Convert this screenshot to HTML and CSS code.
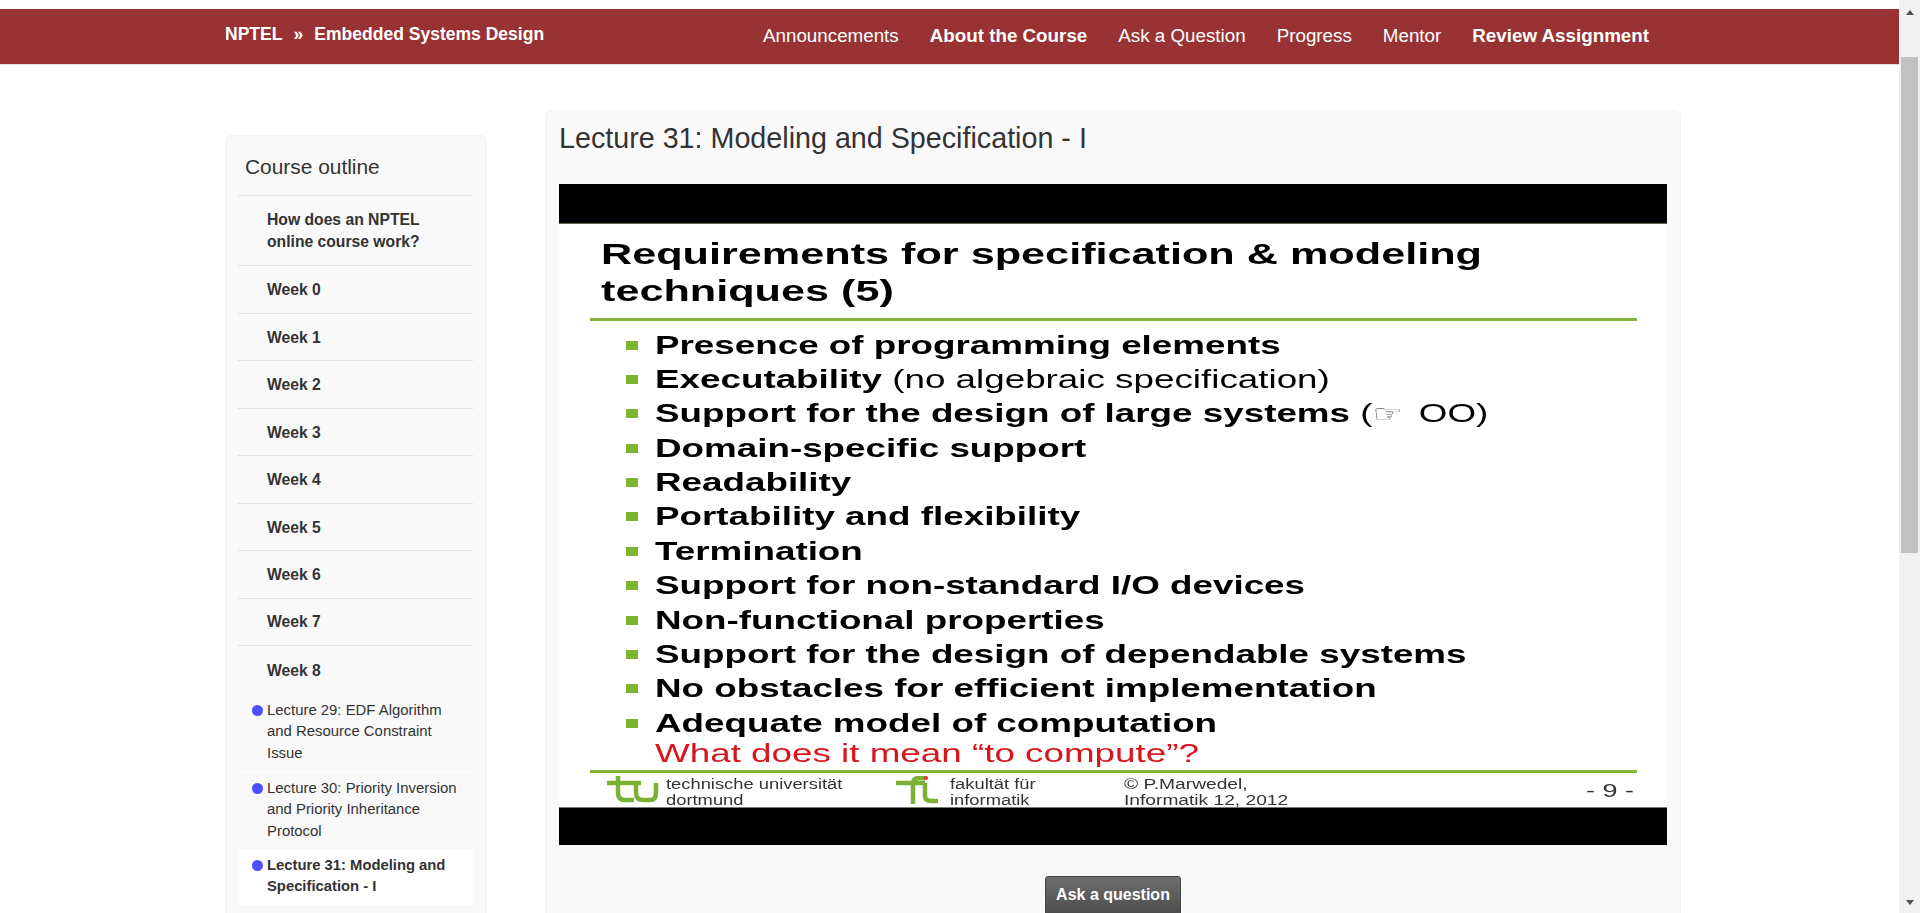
FILE: index.html
```html
<!DOCTYPE html>
<html lang="en">
<head>
<meta charset="utf-8">
<title>Lecture 31: Modeling and Specification - I</title>
<link rel="stylesheet" href="styles.css">
</head>
<body>
<div class="page">
  <header class="nav">
    <div class="brand"><span>NPTEL</span><span>»</span><span>Embedded Systems Design</span></div>
    <nav class="links">
      <a>Announcements</a>
      <a class="strong">About the Course</a>
      <a>Ask a Question</a>
      <a>Progress</a>
      <a>Mentor</a>
      <a class="strong">Review Assignment</a>
    </nav>
  </header>
  <div class="content">
    <aside class="outline">
      <h2 class="outline-title">Course outline</h2>
      <ul class="weeks">
        <li class="intro">How does an NPTEL online course work?</li>
        <li>Week 0</li>
        <li>Week 1</li>
        <li>Week 2</li>
        <li>Week 3</li>
        <li>Week 4</li>
        <li>Week 5</li>
        <li>Week 6</li>
        <li>Week 7</li>
        <li class="open">Week 8</li>
      </ul>
      <ul class="lectures">
        <li class="divided"><i class="dot"></i><span>Lecture 29: EDF Algorithm and Resource Constraint Issue</span></li>
        <li><i class="dot"></i><span>Lecture 30: Priority Inversion and Priority Inheritance Protocol</span></li>
        <li class="active"><i class="dot"></i><span>Lecture 31: Modeling and Specification - I</span></li>
      </ul>
    </aside>
    <main class="lecture">
      <h1 class="lecture-title">Lecture 31: Modeling and Specification - I</h1>
      <div class="video">
        <div class="bar bar-top"></div>
        <div class="slide">
          <div class="slide-title"><div>Requirements for specification &amp; modeling</div><div>techniques (5)</div></div>
          <div class="rule rule-top"></div>
          <ul class="points">
            <li><span>Presence of programming elements</span></li>
            <li><span>Executability <em>(no algebraic specification)</em></span></li>
            <li><span>Support for the design of large systems <em>(<b class="hand">☞</b> OO)</em></span></li>
            <li><span>Domain-specific support</span></li>
            <li><span>Readability</span></li>
            <li><span>Portability and flexibility</span></li>
            <li><span>Termination</span></li>
            <li><span>Support for non-standard I/O devices</span></li>
            <li><span>Non-functional properties</span></li>
            <li><span>Support for the design of dependable systems</span></li>
            <li><span>No obstacles for efficient implementation</span></li>
            <li><span>Adequate model of computation</span></li>
          </ul>
          <p class="red"><span>What does it mean “to compute”?</span></p>
          <div class="rule rule-bottom"></div>
          <div class="slide-foot">
            <svg class="logo-tu" viewBox="0 0 52 27" aria-hidden="true"><path d="M0 7H34M11 0V17Q11 24 18 24H27M29 7V17Q29 24 36 24H43Q49 24 49 17V7" fill="none" stroke="#7cb233" stroke-width="4.5"/></svg>
            <div class="foot-cell foot-tu"><div class="foot-text">technische universität<br>dortmund</div></div>
            <svg class="logo-fi" viewBox="0 0 42 28" aria-hidden="true"><path d="M0 7H29M17 28V8Q17 2 23 2H29M29 7V20Q29 25 35 25H42" fill="none" stroke="#7cb233" stroke-width="4.5"/><circle cx="30" cy="2" r="2" fill="#e0312f"/></svg>
            <div class="foot-cell foot-fi"><div class="foot-text">fakultät für<br>informatik</div></div>
            <div class="foot-cell foot-copy"><div class="foot-text wide">© P.Marwedel,<br>Informatik 12, 2012</div></div>
            <div class="foot-page">- 9 -</div>
          </div>
        </div>
        <div class="bar bar-bottom"></div>
      </div>
      <div class="actions"><button class="ask" type="button">Ask a question</button></div>
    </main>
  </div>
</div>
<div class="scrollbar">
  <div class="arrow arrow-up"></div>
  <div class="thumb"></div>
  <div class="arrow arrow-down"></div>
</div>
</body>
</html>
```
FILE: styles.css
```css
* { box-sizing: border-box; }
html, body { margin: 0; height: 913px; overflow: hidden; }
body {
  display: flex;
  background: #fff;
  color: #333;
  font-family: "Liberation Sans", Arial, sans-serif;
}
ul { list-style: none; margin: 0; padding: 0; }
h1, h2, p { margin: 0; font-weight: 400; }

.page { flex: 1; min-width: 0; padding-top: 9px; overflow: hidden; }

.nav {
  display: flex;
  justify-content: space-between;
  height: 56px;
  padding: 0 250px 0 225px;
  background: #993333;
  border-bottom: 1px solid #ddd;
  color: #fff;
}
.brand {
  display: flex;
  gap: 11px;
  padding-top: 14px;
  font-size: 17.55px;
  line-height: 22px;
  font-weight: 700;
}
.links {
  display: flex;
  gap: 31px;
  padding-top: 15px;
  font-size: 18.8px;
  line-height: 23px;
}
.links .strong { font-weight: 700; }

.content {
  display: flex;
  align-items: flex-start;
  gap: 58px;
  padding: 45px 0 0 225px;
}

.outline {
  width: 262px;
  margin-top: 25px;
  padding: 0 13px 40px 12px;
  background: #f9f9f9;
  border: 1px solid #f3f3f3;
  border-radius: 6px;
}
.outline-title {
  height: 60px;
  padding: 18px 0 0 7px;
  font-size: 20.9px;
  line-height: 25px;
  border-bottom: 1px solid #e2e2e2;
}
.weeks li {
  padding: 12.9px 25px 11.56px 29px;
  font-size: 15.7px;
  line-height: 22px;
  font-weight: 700;
  border-bottom: 1px solid #e2e2e2;
}
.weeks li.intro { padding-bottom: 12.56px; }
.weeks li.open { padding: 13.6px 25px 12.26px 29px; border-bottom: 0; }

.lectures li {
  display: flex;
  gap: 4.5px;
  padding: 6px 9px 6.6px 13.5px;
  font-size: 14.9px;
  line-height: 21.5px;
}
.lectures li.divided { border-bottom: 1px solid #fff; }
.lectures li.active {
  background: #fff;
  font-weight: 700;
  font-size: 14.8px;
}
.dot {
  flex: none;
  width: 11px;
  height: 11px;
  margin-top: 5px;
  border-radius: 50%;
  background: #4f4fff;
}

.lecture {
  width: 1136px;
  height: 900px;
  padding: 12px 13px 0;
  background: #f9f9f9;
  border: 1px solid #f3f3f3;
  border-radius: 6px;
}
.lecture-title {
  font-size: 28.7px;
  line-height: 30px;
  color: #333;
}
.video {
  width: 1108px;
  margin-top: 31px;
  overflow: hidden;
}
.bar { height: 40px; background: #000; }
.bar-top { border-bottom: 1px solid #5a6b45; }
.bar-bottom { height: 38px; border-top: 1px solid #777; }
.slide {
  height: 583px;
  background: #fff;
  color: #000;
  overflow: hidden;
  filter: blur(0.45px);
}
.slide-title {
  padding: 11px 0 0 41.5px;
  font-size: 30px;
  line-height: 37px;
  font-weight: 700;
  white-space: nowrap;
}
.slide-title div { transform: scaleX(1.44); transform-origin: left center; }
.rule { height: 3px; margin: 0 30px 0 31px; background: #85b53d; }
.rule-top { margin-top: 9px; }
.points { margin-top: 7px; padding-left: 67px; }
.points li {
  display: flex;
  align-items: center;
  height: 34.36px;
  font-size: 26px;
  font-weight: 700;
  white-space: nowrap;
}
.points li::before {
  content: "";
  flex: none;
  width: 12px;
  height: 9px;
  margin-right: 17px;
  background: #7fb52e;
}
.points span, .red span {
  display: inline-block;
  transform: scaleX(1.415);
  transform-origin: left center;
}
.points em { font-style: normal; font-weight: 400; }
.hand {
  display: inline-block;
  margin: 0 4px 0 0;
  font-family: "DejaVu Sans", sans-serif;
  font-weight: 400;
  font-size: 24px;
  line-height: 20px;
  color: #666;
}
.red {
  height: 26px;
  padding-left: 96px;
  font-size: 26px;
  line-height: 27px;
  color: #d8171d;
  white-space: nowrap;
}
.rule-bottom { margin-top: 4px; }
.slide-foot {
  display: flex;
  height: 33px;
  padding: 3px 0 0 48px;
  font-size: 14px;
  line-height: 16px;
  color: #333;
}
.foot-cell { padding-top: 0; }
.foot-text {
  white-space: nowrap;
  transform: scaleX(1.31);
  transform-origin: left center;
}
.foot-text.wide { transform: scaleX(1.37); }
.logo-tu { flex: none; width: 52px; height: 27px; margin-right: 7px; }
.foot-tu { width: 230px; }
.logo-fi { flex: none; width: 42px; height: 28px; margin-right: 12px; }
.foot-fi { width: 174px; }
.foot-copy { width: 462px; }
.foot-page {
  font-size: 18px;
  line-height: 30px;
  white-space: pre;
  transform: scaleX(1.5);
  transform-origin: left center;
}

.actions { display: flex; justify-content: center; margin-top: 31px; }
.ask {
  width: 136px;
  height: 42px;
  padding: 0 0 4px;
  font: 700 16px/22px "Liberation Sans", Arial, sans-serif;
  color: #fff;
  background: linear-gradient(#6e6e6e, #4a4a4a);
  border: 1px solid #444;
  border-radius: 3px;
}

.scrollbar {
  flex: none;
  display: flex;
  flex-direction: column;
  align-items: center;
  width: 21px;
  height: 913px;
  background: #f1f1f1;
}
.thumb { width: 17px; height: 496px; margin-top: 42px; background: #c1c1c1; }
.arrow { width: 0; height: 0; border-left: 4.5px solid transparent; border-right: 4.5px solid transparent; }
.arrow-up { margin-top: 10px; border-bottom: 5px solid #505050; }
.arrow-down { margin-top: auto; margin-bottom: 8px; border-top: 5px solid #505050; }
```
